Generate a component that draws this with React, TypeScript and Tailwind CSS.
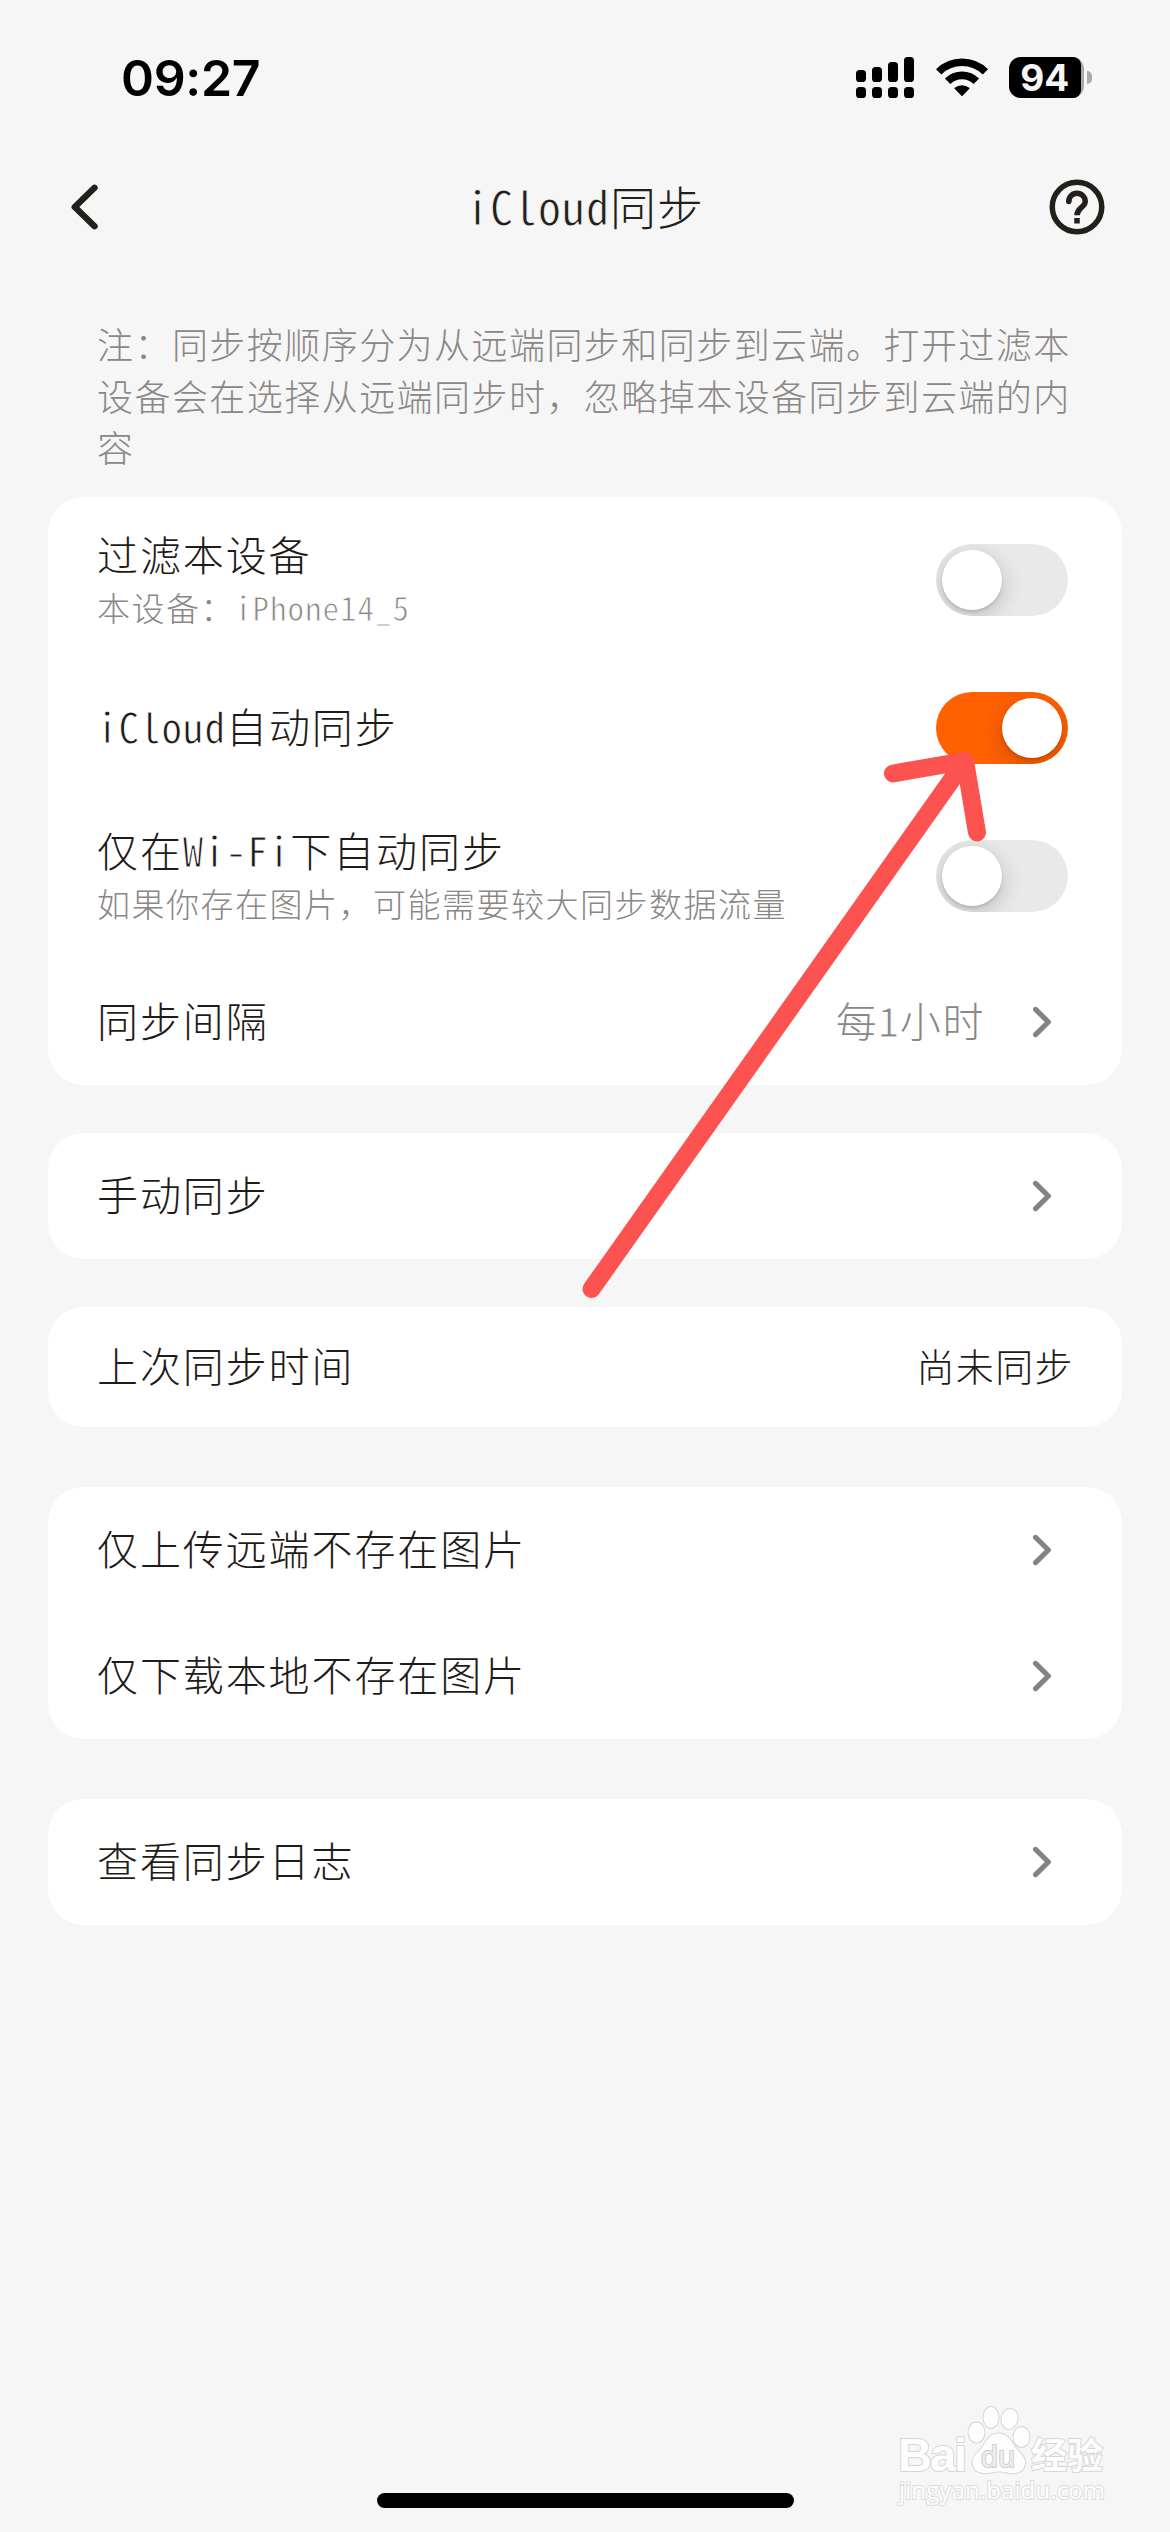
import { ReactNode, useState } from "react";

const bars = [
  { x: 0, y: 13 },
  { x: 16, y: 10 },
  { x: 32, y: 5 },
  { x: 48, y: 0 },
];

function StatusBar() {
  return (
    <div className="flex h-[141px] items-start justify-between pt-[57px] pr-[78px] pl-[121px]">
      <span className="font-['Inter',sans-serif] text-[50px] leading-[42px] font-semibold tracking-[-0.3px] text-black">
        09:27
      </span>
      <div className="flex h-[41px] items-start">
        <svg className="mr-[22px] h-[41px] w-[58px]" viewBox="0 0 58 41">
          {bars.map((bar) => (
            <g key={bar.x}>
              <rect x={bar.x} y={bar.y} width="10" height={25 - bar.y} rx="3.6" />
              <rect x={bar.x} y="30" width="10" height="11" rx="3.6" />
            </g>
          ))}
        </svg>
        <svg className="mr-[21px] h-[41px] w-[52px]" viewBox="0 0 52 41" fill="none" stroke="#000">
          <path d="M2.6 14.9A33.2 33.2 0 0 1 49.4 14.9" strokeWidth="7.6" />
          <path d="M11.6 24.3A20.5 20.5 0 0 1 40.4 24.3" strokeWidth="7.8" />
          <path
            d="M19.2 31.3A11 11 0 0 1 32.8 31.3L26 38.2Z"
            fill="#000"
            strokeWidth="1.6"
            strokeLinejoin="round"
          />
        </svg>
        <div className="flex items-center">
          <div className="flex h-[41px] w-[75px] rounded-[12px] bg-[#aaaaaa]">
            <div className="h-[41px] w-[71.5px] rounded-l-[12px] rounded-r-[8px] bg-black text-center font-['Inter',sans-serif] text-[37px] leading-[41px] font-bold text-[#f6f6f6]">
              94
            </div>
          </div>
          <div className="ml-[3px] h-[13px] w-[5px] rounded-r-full bg-[#aaaaaa]" />
        </div>
      </div>
    </div>
  );
}

// Latin glyphs take half of a CJK cell, the outline in the background colour keeps them light
function Half({ className = "", children }: { className?: string; children: ReactNode }) {
  return (
    <span
      className={
        "font-['Noto_Sans_Mono_CJK_SC','Liberation_Mono',monospace] [-webkit-text-stroke-width:0.9px] " +
        (className || "tracking-[1px] [-webkit-text-stroke-color:#fff]")
      }
    >
      {children}
    </span>
  );
}

function Header() {
  return (
    <header className="flex h-[132px] items-center justify-between pr-[60px] pl-[60px] text-[#231f1b]">
      <svg className="h-[66px] w-[66px]" viewBox="0 0 66 66" fill="none" stroke="currentColor">
        <path d="M34.5 13.8L14.8 33L34.5 52.2" strokeWidth="6.4" strokeLinecap="round" strokeLinejoin="round" />
      </svg>
      <h1 className="pb-[5px] text-[46px] leading-[66px] tracking-[1px]">
        <Half className="tracking-[1px] [-webkit-text-stroke-color:#f6f6f6]">iCloud</Half>同步
      </h1>
      <svg className="h-[66px] w-[66px]" viewBox="0 0 24 24" fill="none" stroke="currentColor" strokeWidth="2">
        <circle cx="12" cy="12" r="9" />
        <path d="M9 10A3 3 0 0 1 15 10C15 12.1 12 12.3 12 15" />
        <circle cx="9" cy="10" r="1" fill="currentColor" stroke="none" />
        <path d="M12 16V18" />
      </svg>
    </header>
  );
}

function Switch({ defaultOn = false }: { defaultOn?: boolean }) {
  const [on, setOn] = useState(defaultOn);
  return (
    <button
      role="switch"
      aria-checked={on}
      onClick={() => setOn(!on)}
      className={
        "mr-1.5 flex h-[72px] w-[132px] items-center overflow-hidden rounded-full px-1.5 " +
        (on ? "justify-end bg-[#ff6000]" : "justify-start bg-[#e9e9e9]")
      }
    >
      <span className="h-[60px] w-[60px] rounded-full bg-white shadow-[0_6px_22px_rgba(0,0,0,0.2),0_2px_3px_rgba(0,0,0,0.12)]" />
    </button>
  );
}

function Chevron() {
  return (
    <svg className="mr-[22px] h-[32px] w-[20px]" viewBox="0 0 20 32" fill="none">
      <path
        d="M3.6 3.4L16.4 16L3.6 28.6"
        stroke="#868281"
        strokeWidth="5.2"
        strokeLinecap="round"
        strokeLinejoin="round"
      />
    </svg>
  );
}

function Card({ className = "", children }: { className?: string; children: ReactNode }) {
  return <section className={"mx-12 rounded-[36px] bg-white " + className}>{children}</section>;
}

interface RowProps {
  title: ReactNode;
  subtitle?: ReactNode;
  height?: string;
  children?: ReactNode;
}

function Row({ title, subtitle, height = "h-[126px]", children }: RowProps) {
  return (
    <div className={"flex items-center justify-between pr-12 pl-[49px] " + height}>
      <div>
        <div className="pb-[5px] text-[41px] leading-[49px] tracking-[1.9px] text-[#1f1b18]">{title}</div>
        {subtitle && (
          <div className="text-[33px] leading-[48px] tracking-[1.5px] text-[#8a8786]">{subtitle}</div>
        )}
      </div>
      <div className="flex items-center">{children}</div>
    </div>
  );
}

function Arrow() {
  return (
    <svg
      className="pointer-events-none absolute top-[740px] left-[570px] h-[570px] w-[430px]"
      viewBox="570 740 430 570"
      fill="none"
      stroke="#fc5350"
      strokeWidth="18"
      strokeLinecap="round"
      strokeLinejoin="round"
    >
      <path d="M591.5 1289L965 761" />
      <path d="M893 773.5L965 761L977 832.5" />
    </svg>
  );
}

function Watermark() {
  return (
    <svg
      className="absolute top-[2400px] left-[890px] h-[110px] w-[230px]"
      viewBox="0 0 230 110"
      fill="#fdfdfd"
      stroke="#d6d6d6"
      strokeWidth="2"
      paintOrder="stroke"
    >
      <g fontFamily="'Liberation Sans', sans-serif" fontWeight="bold">
        <text x="8" y="71" fontSize="47" textLength="69">
          Bai
        </text>
        <ellipse cx="86.5" cy="32.5" rx="8" ry="10" />
        <ellipse cx="101" cy="17.5" rx="7.5" ry="10.5" />
        <ellipse cx="119.5" cy="19" rx="8" ry="10" transform="rotate(12 119.5 19)" />
        <ellipse cx="131.5" cy="37" rx="8" ry="10" />
        <path d="M108.5 33.5C117 33.5 121 40 125 47C130 53 136 57 135 64C134 72 127 74 119 73C111 71 107 71 99 73C90 74 83 71 82.5 63C82 56 89 52 93 46C97 39 101 33.5 108.500 33.5Z" />
        <text x="91" y="66.5" fontSize="30" fontWeight="normal" textLength="34" stroke="#d0d0d0" fill="#ededed">
          du
        </text>
      </g>
      <text
        x="141"
        y="69"
        fontSize="36"
        fontWeight="bold"
        textLength="72"
        fontFamily="'Noto Sans CJK SC', sans-serif"
      >
        经验
      </text>
      <text
        x="9"
        y="99"
        fontSize="24"
        fontWeight="normal"
        textLength="206"
        stroke="#dddddd"
        fontFamily="'Open Sans', 'Noto Sans', sans-serif"
      >
        jingyan.baidu.com
      </text>
    </svg>
  );
}

export default function App() {
  return (
    <div
      lang="zh-CN"
      className="relative flex h-[2532px] w-[1170px] flex-col overflow-hidden bg-[#f6f6f6] font-['Noto_Sans_CJK_SC',sans-serif] font-light"
    >
      <StatusBar />
      <Header />

      <p className="h-[224px] w-[1080px] pt-[45px] pl-[97px] text-[36px] leading-[51.5px] tracking-[1.45px] text-[#8a8786]">
        注：同步按顺序分为从远端同步和同步到云端。打开过滤本设备会在选择从远端同步时，忽略掉本设备同步到云端的内容
      </p>

      <Card>
        <Row
          height="h-[166px]"
          title="过滤本设备"
          subtitle={
            <>
              本设备：<Half>iPhone14_5</Half>
            </>
          }
        >
          <Switch />
        </Row>
        <Row
          height="h-[130px]"
          title={
            <>
              <Half>iCloud</Half>自动同步
            </>
          }
        >
          <Switch defaultOn />
        </Row>
        <Row
          height="h-[166px]"
          title={
            <>
              仅在<Half>Wi-Fi</Half>下自动同步
            </>
          }
          subtitle="如果你存在图片，可能需要较大同步数据流量"
        >
          <Switch />
        </Row>
        <Row title="同步间隔">
          <span className="mr-[47px] pb-[5px] text-[41px] leading-[49px] tracking-[1.6px] text-[#8a8786]">
            每<Half>1</Half>小时
          </span>
          <Chevron />
        </Row>
      </Card>

      <Card className="mt-12">
        <Row title="手动同步">
          <Chevron />
        </Row>
      </Card>

      <Card className="mt-12">
        <Row title="上次同步时间" height="h-[120px]">
          <span className="pb-[5px] text-[38px] leading-[49px] tracking-[1.4px] text-[#1f1b18]">尚未同步</span>
        </Row>
      </Card>

      <Card className="mt-[60px]">
        <Row title="仅上传远端不存在图片">
          <Chevron />
        </Row>
        <Row title="仅下载本地不存在图片">
          <Chevron />
        </Row>
      </Card>

      <Card className="mt-[60px]">
        <Row title="查看同步日志">
          <Chevron />
        </Row>
      </Card>

      <div className="mx-auto mt-auto mb-6 h-[15px] w-[417px] rounded-full bg-black" />

      <Arrow />
      <Watermark />
    </div>
  );
}
